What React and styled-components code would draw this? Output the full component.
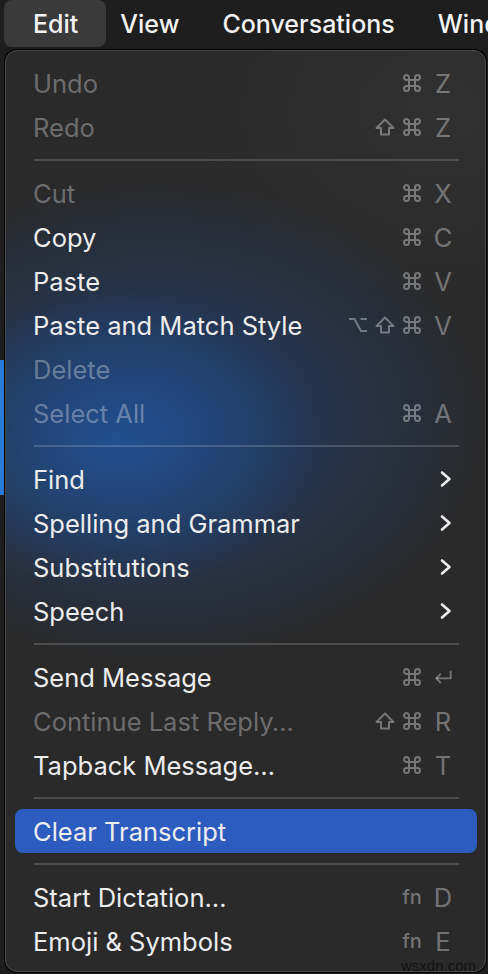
import styled, { createGlobalStyle } from 'styled-components';

const Global = createGlobalStyle`
  html, body {
    margin: 0;
    padding: 0;
    background: #1b1b1b;
  }
  body {
    font-family: Inter, 'Noto Sans', sans-serif;
    -webkit-font-smoothing: antialiased;
  }
`

const ITEMS = [
  { label: 'Undo', keys: ['cmd'], key: 'Z', disabled: true },
  { label: 'Redo', keys: ['shift', 'cmd'], key: 'Z', disabled: true },
  { sep: true },
  { label: 'Cut', keys: ['cmd'], key: 'X', disabled: true },
  { label: 'Copy', keys: ['cmd'], key: 'C' },
  { label: 'Paste', keys: ['cmd'], key: 'V' },
  { label: 'Paste and Match Style', keys: ['opt', 'shift', 'cmd'], key: 'V' },
  { label: 'Delete', disabled: true },
  { label: 'Select All', keys: ['cmd'], key: 'A', disabled: true },
  { sep: true },
  { label: 'Find', sub: true },
  { label: 'Spelling and Grammar', sub: true },
  { label: 'Substitutions', sub: true },
  { label: 'Speech', sub: true },
  { sep: true },
  { label: 'Send Message', keys: ['cmd'], key: 'return' },
  { label: 'Continue Last Reply…', keys: ['shift', 'cmd'], key: 'R', disabled: true },
  { label: 'Tapback Message…', keys: ['cmd'], key: 'T' },
  { sep: true },
  { label: 'Clear Transcript', active: true },
  { sep: true },
  { label: 'Start Dictation…', fn: true, key: 'D' },
  { label: 'Emoji & Symbols', fn: true, key: 'E' },
];

// modifier glyphs, drawn so their size matches the menu
const CmdIcon = () => (
  <svg width="20" height="20" viewBox="0 0 20 20" fill="none">
    <path d="M7 7V4.5A2.5 2.5 0 1 0 4.5 7H15.5A2.5 2.5 0 1 0 13 4.5V15.5A2.5 2.5 0 1 0 15.5 13H4.5A2.5 2.5 0 1 0 7 15.5Z"
      stroke="currentColor" strokeWidth="2" strokeLinejoin="round" />
  </svg>
);

const ShiftIcon = () => (
  <svg width="22" height="20" viewBox="0 0 22 20" fill="none">
    <path d="M11 2.5L19.5 11H15V17.5H7V11H2.5Z" stroke="currentColor" strokeWidth="2" strokeLinejoin="round" />
  </svg>
);

const OptIcon = () => (
  <svg width="20" height="20" viewBox="0 0 20 20" fill="none">
    <path d="M1 4H6.5L13 16H19M12.5 4H19" stroke="currentColor" strokeWidth="2" />
  </svg>
);

const ReturnIcon = () => (
  <svg width="22" height="20" viewBox="0 0 22 20" fill="none">
    <path d="M19.5 3v8.5H3.5" stroke="currentColor" strokeWidth="2" strokeLinejoin="round" />
    <path d="M8 7L3.5 11.5L8 16" stroke="currentColor" strokeWidth="2" strokeLinecap="round" strokeLinejoin="round" />
  </svg>
);

const Chevron = () => (
  <svg width="14" height="20" viewBox="0 0 14 20" fill="none">
    <path d="M3 3.5l7.5 6.5L3 16.5" stroke="currentColor" strokeWidth="2.6" strokeLinecap="round" strokeLinejoin="round" />
  </svg>
);

const MODS = { cmd: CmdIcon, shift: ShiftIcon, opt: OptIcon };

const App = () => {
  return (
    <>
      <Global />
      <Page>
        <MenuBar>
          <BarItem $open>Edit</BarItem>
          <BarItem>View</BarItem>
          <BarItem>Conversations</BarItem>
          <BarItem>Window</BarItem>
        </MenuBar>
        <Body>
          <Behind />
          <Menu>
            {ITEMS.map((item, i) => item.sep ? <Separator key={i} /> : (
              <Row key={i} $active={item.active} $disabled={item.disabled}>
                <Label>{item.label}</Label>
                {item.sub && <Sub><Chevron /></Sub>}
                {(item.keys || item.fn) && (
                  <Shortcut>
                    {item.fn && <Fn>fn</Fn>}
                    {item.keys && item.keys.map(k => {
                      const Icon = MODS[k];
                      return <Mod key={k}><Icon /></Mod>;
                    })}
                    <Key>{item.key === 'return' ? <ReturnIcon /> : item.key}</Key>
                  </Shortcut>
                )}
              </Row>
            ))}
          </Menu>
        </Body>
        <Watermark>wsxdn.com</Watermark>
      </Page>
    </>
  );
};

export default App;

const Page = styled.div`
  position: relative;
  width: 488px;
  height: 974px;
  overflow: hidden;
  background: #1c1c1c;
`
const MenuBar = styled.nav`
  display: flex;
  align-items: center;
  height: 47px;
  padding-left: 4px;
  background: #1e1e1e;
  white-space: nowrap;
  & > :nth-child(2) {
    margin-left: 0;
  }
`
const BarItem = styled.div`
  height: 47px;
  display: flex;
  align-items: center;
  flex-shrink: 0;
  padding: ${p => p.$open ? '0 28px 0 29px' : '0 14px'};
  margin-left: ${p => p.$open ? '0' : '15px'};
  border-radius: 8px;
  background: ${p => p.$open ? '#3a3a3b' : 'transparent'};
  color: #f2f2f2;
  font-size: 25px;
  font-weight: 500;
`
const Body = styled.div`
  display: flex;
  padding-top: 3px;
`
const Behind = styled.div`
  width: 5px;
  flex-shrink: 0;
  height: 920px;
  background: linear-gradient(180deg, #1e1e1e 0, #1e1e1e 310px, #2a7ad8 310px, #2a7ad8 445px, #1e1e1e 445px);
`
const Menu = styled.div`
  flex: 1;
  margin-right: 2px;
  padding: 10px 8px 8px 9px;
  border-radius: 12px;
  border: 1px solid #4a4a4a;
  box-shadow: 0 0 0 1px #000;
  background:
    radial-gradient(ellipse 200px 150px at 110px 390px, rgba(34, 82, 150, 0.85), rgba(34, 82, 150, 0) 100%),
    radial-gradient(ellipse 330px 240px at 150px 370px, rgba(30, 66, 120, 0.85), rgba(30, 66, 120, 0.35) 60%, rgba(30, 66, 120, 0) 100%),
    radial-gradient(ellipse 260px 200px at 440px 60px, rgba(255, 255, 255, 0.03), rgba(255, 255, 255, 0) 100%),
    #2a2a2b;
`
const Row = styled.div`
  display: flex;
  align-items: center;
  height: 44px;
  padding: 0 24px 0 18px;
  border-radius: 8px;
  background: ${p => p.$active ? '#2d5cc0' : 'transparent'};
  color: ${p => p.$disabled ? 'rgba(255,255,255,0.32)' : '#ededed'};
`
const Label = styled.span`
  flex: 1;
  font-size: 25.5px;
  font-weight: 400;
  white-space: nowrap;
`
const Sub = styled.span`
  display: flex;
  color: #ededed;
`
const Shortcut = styled.span`
  display: flex;
  align-items: center;
  gap: 6px;
  color: rgba(255,255,255,0.36);
  font-size: 25.5px;
`
const Mod = styled.span`
  display: flex;
`
const Fn = styled.span`
  font-size: 20px;
  font-weight: 500;
  width: 20px;
  text-align: center;
`
const Key = styled.span`
  display: flex;
  justify-content: center;
  width: 20px;
  margin-left: 5px;
`
const Separator = styled.div`
  height: 2px;
  margin: 10px 18px 10px 19px;
  background: rgba(255,255,255,0.16);
`
const Watermark = styled.div`
  position: absolute;
  right: 12px;
  bottom: 0;
  font-family: 'Liberation Sans', sans-serif;
  font-size: 15px;
  color: #111;
`
